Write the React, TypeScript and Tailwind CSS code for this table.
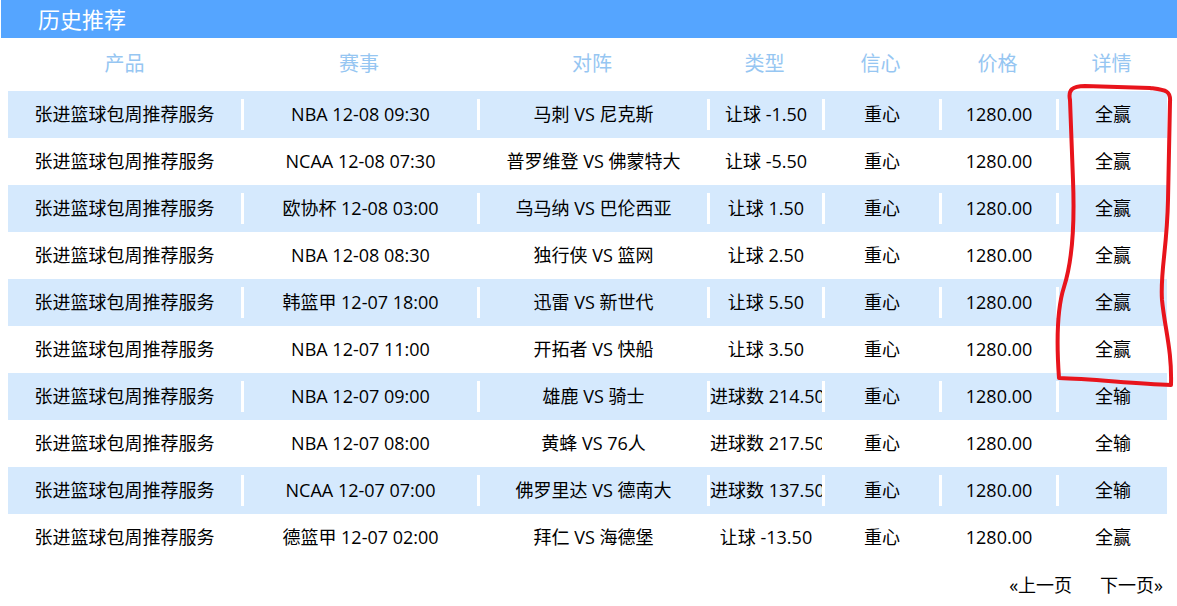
import React from 'react';

const rows = [
  { match: 'NBA 12-08 09:30', teams: '马刺 VS 尼克斯', type: '让球 -1.50', result: '全赢' },
  { match: 'NCAA 12-08 07:30', teams: '普罗维登 VS 佛蒙特大', type: '让球 -5.50', result: '全赢' },
  { match: '欧协杯 12-08 03:00', teams: '乌马纳 VS 巴伦西亚', type: '让球 1.50', result: '全赢' },
  { match: 'NBA 12-08 08:30', teams: '独行侠 VS 篮网', type: '让球 2.50', result: '全赢' },
  { match: '韩篮甲 12-07 18:00', teams: '迅雷 VS 新世代', type: '让球 5.50', result: '全赢' },
  { match: 'NBA 12-07 11:00', teams: '开拓者 VS 快船', type: '让球 3.50', result: '全赢' },
  { match: 'NBA 12-07 09:00', teams: '雄鹿 VS 骑士', type: '进球数 214.50', result: '全输' },
  { match: 'NBA 12-07 08:00', teams: '黄蜂 VS 76人', type: '进球数 217.50', result: '全输' },
  { match: 'NCAA 12-07 07:00', teams: '佛罗里达 VS 德南大', type: '进球数 137.50', result: '全输' },
  { match: '德篮甲 12-07 02:00', teams: '拜仁 VS 海德堡', type: '让球 -13.50', result: '全赢' },
];

const widths = ['w-[233px]', 'w-[236px]', 'w-[230px]', 'w-[115px]', 'w-[117px]', 'w-[117px]', 'w-[111px]'];
const heads = ['产品', '赛事', '对阵', '类型', '信心', '价格', '详情'];

function Cell({ i, children }: { i: number; children: React.ReactNode }) {
  return (
    <div className={`${widths[i]} shrink-0 flex items-center`}>
      <div
        className={`w-full h-[31px] flex items-center overflow-hidden whitespace-nowrap ${
          i > 0 ? 'border-l-[3px] border-white' : ''
        }`}
      >
        <span className="block w-full text-center overflow-hidden whitespace-nowrap">{children}</span>
      </div>
    </div>
  );
}

export default function App() {
  return (
    <div
      className="relative w-[1177px] h-[606px] bg-white overflow-hidden text-black"
      style={{ fontFamily: '"Open Sans", "Noto Sans CJK SC", sans-serif' }}
    >
      <div className="ml-px h-[38px] bg-[#55a5ff] flex items-center pl-[37px]">
        <h1 className="text-[22px] text-white leading-none">历史推荐</h1>
      </div>

      <div className="ml-[8px] w-[1159px]">
        <div className="flex h-[53px] items-center pb-[2px] text-[20px] text-[#96c6f2]">
          {heads.map((h, i) => (
            <div key={h} className={`${widths[i]} shrink-0 text-center`}>{h}</div>
          ))}
        </div>

        {rows.map((r, idx) => (
          <div key={idx} className={`flex h-[47px] text-[18px] ${idx % 2 === 0 ? 'bg-[#d5e9fd]' : 'bg-white'}`}>
            <Cell i={0}>张进篮球包周推荐服务</Cell>
            <Cell i={1}>{r.match}</Cell>
            <Cell i={2}>{r.teams}</Cell>
            <Cell i={3}>{r.type}</Cell>
            <Cell i={4}>重心</Cell>
            <Cell i={5}>1280.00</Cell>
            <Cell i={6}>{r.result}</Cell>
          </div>
        ))}
      </div>

      <div className="flex justify-end gap-[28px] pr-[14px] mt-[12px] text-[18px] leading-[24px]">
        <span>«上一页</span>
        <span>下一页»</span>
      </div>

      <svg className="absolute left-0 top-0 pointer-events-none" width="1177" height="606" viewBox="0 0 1177 606">
        <path
          d="M1070,100 C1068,90 1072,86 1085,86 L1150,88 C1165,90 1171,90 1170,102 L1168,200 C1167,250 1160,272 1162,300 C1165,330 1172,350 1171,385 C1130,383 1090,379 1059,378 C1057,350 1056,312 1064,287 C1072,262 1075,230 1073,180 L1070,100 Z"
          fill="none"
          stroke="#e8141c"
          strokeWidth="4"
          strokeLinejoin="round"
        />
      </svg>
    </div>
  );
}
